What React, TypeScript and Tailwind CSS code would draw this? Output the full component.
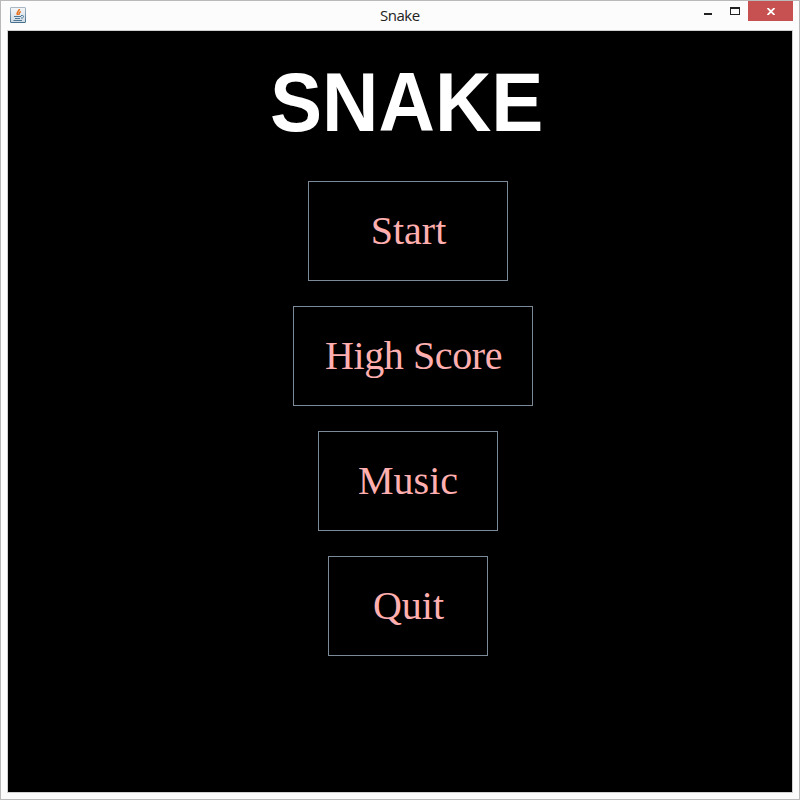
const items = [
  { label: 'Start', box: 'w-[200px] ml-[300px] pl-[1px]' },
  { label: 'High Score', box: 'w-[240px] ml-[285px] pl-[1px] tracking-[-0.4px]' },
  { label: 'Music', box: 'w-[180px] ml-[310px]' },
  { label: 'Quit', box: 'w-[160px] ml-[320px] pl-[1px]' },
];

function JavaIcon() {
  return (
    <svg width="16" height="16" viewBox="0 0 16 16" fill="none">
      <defs>
        <linearGradient id="tile" x1="0" y1="0" x2="0" y2="1">
          <stop offset="0" stopColor="#f4f6f8" />
          <stop offset="1" stopColor="#cfdae3" />
        </linearGradient>
        <linearGradient id="edge" x1="0" y1="0" x2="0" y2="1">
          <stop offset="0" stopColor="#a9b8c4" />
          <stop offset="1" stopColor="#47708f" />
        </linearGradient>
      </defs>
      <rect x="0.5" y="0.5" width="15" height="15" rx="0.5" fill="url(#tile)" stroke="url(#edge)" />
      <path d="M9.4 2C9.4 4.2 6.2 4.4 7.4 8M10.8 4.4C8.8 5.2 9 6.2 8.9 8" stroke="#e87522" strokeWidth="1.6" />
      <path d="M4 9.5h7M5 11.5h5M3.5 13.5h8.5" stroke="#4d7695" strokeWidth="1.1" />
      <path d="M11 8.5h1.5q1 0 1 1t-1 1.5H11" stroke="#4d7695" />
    </svg>
  );
}

export default function App() {
  return (
    <div className="flex h-[800px] w-[800px] flex-col border border-[#b9b9b9] bg-[#fcfcfc] px-[6px] pb-[6px]">
      <header className="flex h-[29px] shrink-0 items-start">
        <div className="w-[373px] pl-[3px] pt-[6px]"><JavaIcon /></div>
        <h1 className="w-[315px] pt-[5px] font-['Open_Sans',sans-serif] text-[15px] leading-[19px] tracking-[-0.5px] text-[#222]">Snake</h1>
        <svg width="53" height="21" viewBox="0 0 53 21" className="shrink-0">
          <path d="M9 12h8v2H9zM35 6h10v8H35zm1 2v5h8V8z" fill="#222" fillRule="evenodd" />
        </svg>
        <div className="flex h-5 w-[45px] shrink-0 items-center justify-center bg-[#c75050] pt-px">
          <svg width="8" height="7" viewBox="0 0 8 7"><path d="M.5 0l7 7M7.5 0l-7 7" stroke="white" strokeWidth="1.8" /></svg>
        </div>
      </header>
      <main className="flex min-h-0 flex-1 flex-col border border-[#d0d0d0] bg-black">
        <h2 className="ml-[262px] h-[150px] w-[300px] origin-left scale-x-[0.93] pt-[24px] font-['Liberation_Sans',sans-serif] text-[84px] font-bold leading-[94px] text-white">SNAKE</h2>
        <nav className="flex flex-col items-start gap-[25px]">
          {items.map((item) => (
            <button key={item.label} className={`flex h-[100px] items-center justify-center border border-[#7a8a99] font-['Liberation_Serif',serif] text-[40px] leading-[46px] text-[#ffafaf] ${item.box}`}>{item.label}</button>
          ))}
        </nav>
      </main>
    </div>
  );
}
